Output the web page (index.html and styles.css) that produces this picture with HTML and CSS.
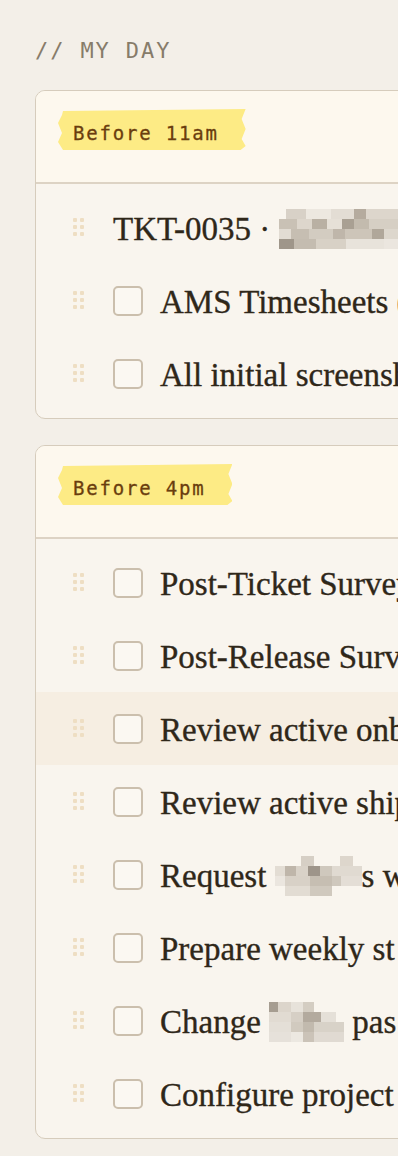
FILE: index.html
```html
<!DOCTYPE html>
<html lang="en">
<head>
    <meta charset="UTF-8">
    <meta name="viewport" content="width=device-width, initial-scale=1.0">
    <title>My Day</title>
    <link rel="stylesheet" href="styles.css">
</head>
<body>
    <div class="page">
        <h2 class="section-label">// MY DAY</h2>

        <div class="block">
            <div class="block-head">
                <span class="tape">Before 11am</span>
            </div>
            <ul class="tasks">
                <li class="task">
                    <svg class="grip" width="11" height="18" viewBox="0 0 11 18"><rect x="0" y="0" width="4" height="4" rx="1"/><rect x="7" y="0" width="4" height="4" rx="1"/><rect x="0" y="7" width="4" height="4" rx="1"/><rect x="7" y="7" width="4" height="4" rx="1"/><rect x="0" y="14" width="4" height="4" rx="1"/><rect x="7" y="14" width="4" height="4" rx="1"/></svg>
                    <span class="task-text">TKT-0035 · <span class="redact redact-long"></span></span>
                </li>
                <li class="task">
                    <svg class="grip" width="11" height="18" viewBox="0 0 11 18"><rect x="0" y="0" width="4" height="4" rx="1"/><rect x="7" y="0" width="4" height="4" rx="1"/><rect x="0" y="7" width="4" height="4" rx="1"/><rect x="7" y="7" width="4" height="4" rx="1"/><rect x="0" y="14" width="4" height="4" rx="1"/><rect x="7" y="14" width="4" height="4" rx="1"/></svg>
                    <span class="check"></span>
                    <span class="task-text">AMS Timesheets (</span>
                </li>
                <li class="task">
                    <svg class="grip" width="11" height="18" viewBox="0 0 11 18"><rect x="0" y="0" width="4" height="4" rx="1"/><rect x="7" y="0" width="4" height="4" rx="1"/><rect x="0" y="7" width="4" height="4" rx="1"/><rect x="7" y="7" width="4" height="4" rx="1"/><rect x="0" y="14" width="4" height="4" rx="1"/><rect x="7" y="14" width="4" height="4" rx="1"/></svg>
                    <span class="check"></span>
                    <span class="task-text">All initial screensh</span>
                </li>
            </ul>
        </div>

        <div class="block">
            <div class="block-head">
                <span class="tape">Before 4pm</span>
            </div>
            <ul class="tasks">
                <li class="task">
                    <svg class="grip" width="11" height="18" viewBox="0 0 11 18"><rect x="0" y="0" width="4" height="4" rx="1"/><rect x="7" y="0" width="4" height="4" rx="1"/><rect x="0" y="7" width="4" height="4" rx="1"/><rect x="7" y="7" width="4" height="4" rx="1"/><rect x="0" y="14" width="4" height="4" rx="1"/><rect x="7" y="14" width="4" height="4" rx="1"/></svg>
                    <span class="check"></span>
                    <span class="task-text">Post-Ticket Survey</span>
                </li>
                <li class="task">
                    <svg class="grip" width="11" height="18" viewBox="0 0 11 18"><rect x="0" y="0" width="4" height="4" rx="1"/><rect x="7" y="0" width="4" height="4" rx="1"/><rect x="0" y="7" width="4" height="4" rx="1"/><rect x="7" y="7" width="4" height="4" rx="1"/><rect x="0" y="14" width="4" height="4" rx="1"/><rect x="7" y="14" width="4" height="4" rx="1"/></svg>
                    <span class="check"></span>
                    <span class="task-text">Post-Release Surv</span>
                </li>
                <li class="task active">
                    <svg class="grip" width="11" height="18" viewBox="0 0 11 18"><rect x="0" y="0" width="4" height="4" rx="1"/><rect x="7" y="0" width="4" height="4" rx="1"/><rect x="0" y="7" width="4" height="4" rx="1"/><rect x="7" y="7" width="4" height="4" rx="1"/><rect x="0" y="14" width="4" height="4" rx="1"/><rect x="7" y="14" width="4" height="4" rx="1"/></svg>
                    <span class="check"></span>
                    <span class="task-text">Review active onb</span>
                </li>
                <li class="task">
                    <svg class="grip" width="11" height="18" viewBox="0 0 11 18"><rect x="0" y="0" width="4" height="4" rx="1"/><rect x="7" y="0" width="4" height="4" rx="1"/><rect x="0" y="7" width="4" height="4" rx="1"/><rect x="7" y="7" width="4" height="4" rx="1"/><rect x="0" y="14" width="4" height="4" rx="1"/><rect x="7" y="14" width="4" height="4" rx="1"/></svg>
                    <span class="check"></span>
                    <span class="task-text">Review active ship</span>
                </li>
                <li class="task">
                    <svg class="grip" width="11" height="18" viewBox="0 0 11 18"><rect x="0" y="0" width="4" height="4" rx="1"/><rect x="7" y="0" width="4" height="4" rx="1"/><rect x="0" y="7" width="4" height="4" rx="1"/><rect x="7" y="7" width="4" height="4" rx="1"/><rect x="0" y="14" width="4" height="4" rx="1"/><rect x="7" y="14" width="4" height="4" rx="1"/></svg>
                    <span class="check"></span>
                    <span class="task-text">Request <span class="redact redact-mid"></span>s we</span>
                </li>
                <li class="task">
                    <svg class="grip" width="11" height="18" viewBox="0 0 11 18"><rect x="0" y="0" width="4" height="4" rx="1"/><rect x="7" y="0" width="4" height="4" rx="1"/><rect x="0" y="7" width="4" height="4" rx="1"/><rect x="7" y="7" width="4" height="4" rx="1"/><rect x="0" y="14" width="4" height="4" rx="1"/><rect x="7" y="14" width="4" height="4" rx="1"/></svg>
                    <span class="check"></span>
                    <span class="task-text">Prepare weekly st</span>
                </li>
                <li class="task">
                    <svg class="grip" width="11" height="18" viewBox="0 0 11 18"><rect x="0" y="0" width="4" height="4" rx="1"/><rect x="7" y="0" width="4" height="4" rx="1"/><rect x="0" y="7" width="4" height="4" rx="1"/><rect x="7" y="7" width="4" height="4" rx="1"/><rect x="0" y="14" width="4" height="4" rx="1"/><rect x="7" y="14" width="4" height="4" rx="1"/></svg>
                    <span class="check"></span>
                    <span class="task-text">Change <span class="redact redact-short"></span> pas</span>
                </li>
                <li class="task">
                    <svg class="grip" width="11" height="18" viewBox="0 0 11 18"><rect x="0" y="0" width="4" height="4" rx="1"/><rect x="7" y="0" width="4" height="4" rx="1"/><rect x="0" y="7" width="4" height="4" rx="1"/><rect x="7" y="7" width="4" height="4" rx="1"/><rect x="0" y="14" width="4" height="4" rx="1"/><rect x="7" y="14" width="4" height="4" rx="1"/></svg>
                    <span class="check"></span>
                    <span class="task-text">Configure project</span>
                </li>
            </ul>
        </div>
    </div>
</body>
</html>
```

FILE: styles.css
```css
body {
    margin: 0;
    padding: 0;
    background-color: #f3efe8;
    color: #2f2719;
    overflow: hidden;
}

.page {
    width: 620px;
    padding: 38px 0 0 35px;
}

.section-label {
    margin: 0 0 26px;
    font-family: "DejaVu Sans Mono", monospace;
    font-size: 22px;
    font-weight: normal;
    line-height: 26px;
    letter-spacing: 1.9px;
    color: #877c6a;
}

.block {
    background-color: #f9f5ee;
    border: 1px solid #d6ccbc;
    border-radius: 10px;
    overflow: hidden;
    margin-bottom: 26px;
}

.block-head {
    background-color: #fdf8ee;
    padding: 18px 22px 32px;
    border-bottom: 2px solid #ddd3c4;
}

.tape {
    display: inline-flex;
    align-items: center;
    box-sizing: border-box;
    height: 41px;
    padding: 7px 27px 0 15px;
    background-color: #fdeb85;
    font-family: "DejaVu Sans Mono", monospace;
    font-size: 19px;
    letter-spacing: 1.8px;
    color: #6a3d0e;
    -webkit-text-stroke: 0.3px #6a3d0e;
    clip-path: polygon(5px 2px, 100% 0, calc(100% - 4px) 10px, 100% 20px, calc(100% - 4px) 30px, 100% 37px, calc(100% - 5px) 100%, 5px 100%, 0 33px, 4px 24px, 0 14px, 4px 6px);
}

.tasks {
    list-style: none;
    margin: 0;
    padding: 7px 0 8px;
}

.task {
    display: flex;
    align-items: center;
    height: 73px;
    padding-left: 37px;
    white-space: nowrap;
}

.task.active {
    background-color: #f6eee2;
}

.grip {
    flex: none;
    fill: #eedec3;
    margin-right: 29px;
    margin-top: -2px;
}

.check {
    flex: none;
    box-sizing: border-box;
    width: 30px;
    height: 30px;
    border: 2px solid #cbbfad;
    border-radius: 5px;
    background-color: #fbf8f2;
    margin-right: 17px;
}

.task-text {
    font-family: "Liberation Serif", "Times New Roman", serif;
    font-size: 33px;
    line-height: 40px;
    color: #2f2719;
    -webkit-text-stroke: 0.35px #2f2719;
    margin-top: 3px;
}

.redact {
    display: inline-block;
    vertical-align: middle;
    height: 40px;
    margin-top: -6px;
    background-repeat: no-repeat;
    background-size: 100% 10px;
}

.redact-long {
    width: 150px;
    background-image:
        linear-gradient(90deg, transparent 0 5%, #d8d1c7 5% 18%, #ede8e0 18% 35%, #e3ddd4 35% 50%, #b5ab9e 50% 58%, #ddd6cc 58% 100%),
        linear-gradient(90deg, #c9c1b5 0 12%, #ddd6cc 12% 22%, #b9b0a3 22% 32%, #e6e0d7 32% 42%, #a9a093 42% 50%, #c3bbae 50% 60%, #d6cfc4 60% 100%),
        linear-gradient(90deg, #e2dcd3 0 8%, #c6beb2 8% 20%, #d3ccc1 20% 36%, #bfb6aa 36% 44%, #cdc5b9 44% 62%, #b0a79a 62% 70%, #ddd7cd 70% 100%),
        linear-gradient(90deg, #9f968a 0 10%, #c4bcb0 10% 25%, #d8d1c6 25% 45%, #e8e3db 45% 70%, #ebe6df 70% 100%);
    background-position: 0 0, 0 10px, 0 20px, 0 30px;
}

.redact-mid {
    width: 87px;
    background-image:
        linear-gradient(90deg, transparent 0 30%, #d6cfc5 30% 45%, transparent 45% 75%, #ddd6cc 75% 90%, transparent 90% 100%),
        linear-gradient(90deg, #e3ddd4 0 12%, #bfb6aa 12% 24%, #d9d2c8 24% 38%, #9e958a 38% 52%, #cfc8bd 52% 66%, #e0dad1 66% 100%),
        linear-gradient(90deg, #ebe6df 0 12%, #d8d1c7 12% 40%, #c6beb2 40% 66%, #cfc8bd 66% 76%, #e4ded6 76% 100%),
        linear-gradient(90deg, transparent 0 12%, #e2dcd3 12% 40%, #d0c9be 40% 66%, transparent 66% 100%);
    background-position: 0 0, 0 10px, 0 20px, 0 30px;
}

.redact-short {
    width: 75px;
    background-image:
        linear-gradient(90deg, #a69d91 0 12%, #dcd5cb 12% 30%, #e7e2da 30% 45%, #d4cdc2 45% 60%, transparent 60% 100%),
        linear-gradient(90deg, #e1dbd2 0 30%, #d6cfc5 30% 45%, #b3aa9e 45% 70%, #e5e0d8 70% 90%, transparent 90% 100%),
        linear-gradient(90deg, #e4dfd7 0 30%, #d1cabf 30% 45%, #c2baae 45% 60%, #d8d2c8 60% 100%),
        linear-gradient(90deg, #e6e1da 0 30%, #ece8e1 30% 45%, #cbc3b8 45% 60%, #e0dad2 60% 100%);
    background-position: 0 0, 0 10px, 0 20px, 0 30px;
}
```
